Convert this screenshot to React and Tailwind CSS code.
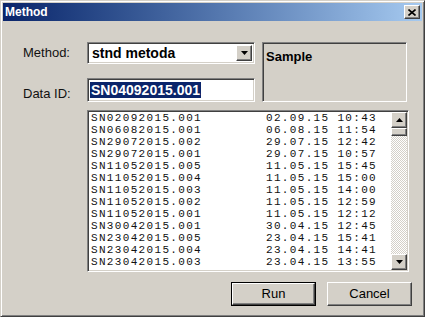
const rows = [
  ["SN02092015.001", "02.09.15 10:43"],
  ["SN06082015.001", "06.08.15 11:54"],
  ["SN29072015.002", "29.07.15 12:42"],
  ["SN29072015.001", "29.07.15 10:57"],
  ["SN11052015.005", "11.05.15 15:45"],
  ["SN11052015.004", "11.05.15 15:00"],
  ["SN11052015.003", "11.05.15 14:00"],
  ["SN11052015.002", "11.05.15 12:59"],
  ["SN11052015.001", "11.05.15 12:12"],
  ["SN30042015.001", "30.04.15 12:45"],
  ["SN23042015.005", "23.04.15 15:41"],
  ["SN23042015.004", "23.04.15 14:41"],
  ["SN23042015.003", "23.04.15 13:55"],
];

const raised =
  "border border-t-white border-l-white border-r-[#404040] border-b-[#404040] shadow-[inset_-1px_-1px_#808080] bg-[#d4d0c8]";
const sunken =
  "border border-t-[#808080] border-l-[#808080] border-r-white border-b-white shadow-[inset_1px_1px_#404040,inset_-1px_-1px_#d4d0c8]";

function Tri({ down }) {
  return (
    <svg width="7" height="4" viewBox="0 0 7 4">
      {down ? <path d="M0 0H7L3.5 4Z" fill="#000" /> : <path d="M0 4H7L3.5 0Z" fill="#000" />}
    </svg>
  );
}

export default function App() {
  return (
    <div className="w-[425px] h-[317px] bg-[#d4d0c8] border border-t-[#d4d0c8] border-l-[#d4d0c8] border-r-[#404040] border-b-[#404040] shadow-[inset_1px_1px_white,inset_-1px_-1px_#808080] p-[2px] flex flex-col font-['Liberation_Sans',Arial,sans-serif] text-black">
      {/* Title bar */}
      <div className="h-[18px] flex items-center justify-between bg-gradient-to-r from-[#0a246a] to-[#a6caf0] pl-[2px] pr-[2px]">
        <span className="text-white font-bold text-[12px] leading-none">Method</span>
        <div className={`${raised} w-[16px] h-[14px] flex items-center justify-center`}>
          <svg width="8" height="7" viewBox="0 0 8 7">
            <path d="M0.5 0.5L7.5 6.5M7.5 0.5L0.5 6.5" stroke="#000" strokeWidth="1.6" />
          </svg>
        </div>
      </div>

      {/* Body */}
      <div className="flex flex-col pt-[21px] pl-[20px]">
        <div className="flex">
          <div className="flex flex-col w-[232px]">
            <div className="flex items-center h-[22px]">
              <span className="w-[64px] text-[13px] text-[#111]">Method:</span>
              <div className={`${sunken} bg-white w-[168px] h-[22px] flex items-center justify-between pl-[2px] pr-[2px]`}>
                <span className="font-bold text-[14px] pl-[2px]">stnd metoda</span>
                <div className={`${raised} w-[16px] h-[16px] flex items-center justify-center`}>
                  <Tri down />
                </div>
              </div>
            </div>
            <div className="flex items-center h-[24px] mt-[14px]">
              <span className="w-[64px] text-[13px] text-[#111] pt-[8px]">Data ID:</span>
              <div className={`${sunken} bg-white w-[168px] h-[24px] flex items-center pl-[2px]`}>
                <span className="font-bold text-[14px] bg-[#0a246a] text-white leading-[16px] px-[1px]">SN04092015.001</span>
              </div>
            </div>
          </div>
          <div className="ml-[7px] w-[145px] h-[60px] border border-t-[#808080] border-l-[#808080] border-r-white border-b-white shadow-[inset_1px_1px_#404040] pl-[3px] pt-[1px]">
            <span className="font-bold text-[13px] leading-[16px]">Sample</span>
          </div>
        </div>

        {/* List */}
        <div className={`${sunken} bg-white ml-[64px] mt-[8px] w-[322px] h-[162px] flex p-[1px]`}>
          <div className="flex-1 overflow-hidden font-['Liberation_Mono',monospace] text-[11px] tracking-[1.33px] text-[#111]">
            {rows.map(([id, dt]) => (
              <div key={id} className="flex h-[12px] leading-[12px] pl-[2px] whitespace-pre">
                <span className="w-[175px]">{id}</span>
                <span>{dt}</span>
              </div>
            ))}
          </div>
          <div className="w-[16px] flex flex-col bg-[repeating-conic-gradient(#d4d0c8_0_25%,#ffffff_0_50%)] bg-size-[2px_2px]">
            <div className={`${raised} h-[16px] flex items-center justify-center`}>
              <Tri />
            </div>
            <div className={`${raised} h-[8px]`} />
            <div className="flex-1" />
            <div className={`${raised} h-[16px] flex items-center justify-center`}>
              <Tri down />
            </div>
          </div>
        </div>

        {/* Buttons */}
        <div className="flex mt-[10px] ml-[208px] gap-[11px]">
          <div className="border border-black">
            <div className={`${raised} w-[83px] h-[22px] flex items-center justify-center text-[13px]`}>Run</div>
          </div>
          <div className={`${raised} w-[85px] h-[24px] flex items-center justify-center text-[13px]`}>Cancel</div>
        </div>
      </div>
    </div>
  );
}
